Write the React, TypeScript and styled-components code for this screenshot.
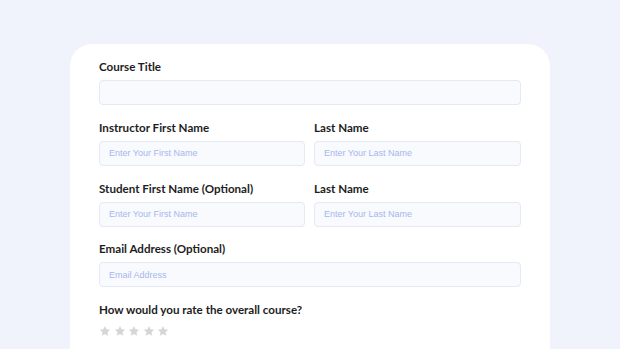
import React from "react";
import styled, { createGlobalStyle } from "styled-components";

const GlobalStyle = createGlobalStyle`
  body {
    margin: 0;
    background: #f0f3fc;
    font-family: "Lato", "Noto Sans", sans-serif;
  }
`;

const Page = styled.div`
  height: 349px;
  overflow: hidden;
  padding-top: 44px;
  box-sizing: border-box;
`;

const Card = styled.div`
  width: 480px;
  height: 330px;
  margin: 0 auto;
  background: #ffffff;
  border-radius: 22px;
  padding: 15px 29px 0;
  box-sizing: border-box;
`;

const Row = styled.div<{ $cols?: number }>`
  display: grid;
  grid-template-columns: ${(p) => (p.$cols === 2 ? "206px 207px" : "1fr")};
  column-gap: 9px;
  margin-bottom: 14.75px;
`;

const Field = styled.div`
  display: flex;
  flex-direction: column;
`;

const Label = styled.label`
  font-size: 11.6px;
  line-height: 16px;
  font-weight: 700;
  color: #1d1d22;
  margin-bottom: 5px;
`;

const Input = styled.input`
  height: 25px;
  box-sizing: border-box;
  width: 100%;
  border: 1px solid #e4e9f2;
  border-radius: 4px;
  background: #f8fafe;
  padding: 0 9px;
  font-family: "Liberation Sans", Arial, sans-serif;
  font-size: 9px;
  outline: none;

  &::placeholder {
    color: #a7b7ec;
  }
`;

const Stars = styled.div`
  display: flex;
  gap: 2.5px;
  margin-top: 2px;
`;

const Star = () => (
  <svg width="12" height="12" viewBox="0 0 24 24">
    <path
      d="M12 1.8l3.1 6.6 7.2.9-5.3 5 1.4 7.1L12 17.9l-6.4 3.5 1.4-7.1-5.3-5 7.2-.9z"
      fill="#d6d6d9"
    />
  </svg>
);

export default function App() {
  return (
    <>
      <GlobalStyle />
      <Page>
        <Card>
          <Row>
            <Field>
              <Label>Course Title</Label>
              <Input />
            </Field>
          </Row>
          <Row $cols={2}>
            <Field>
              <Label>Instructor First Name</Label>
              <Input placeholder="Enter Your First Name" />
            </Field>
            <Field>
              <Label>Last Name</Label>
              <Input placeholder="Enter Your Last Name" />
            </Field>
          </Row>
          <Row $cols={2}>
            <Field>
              <Label>Student First Name (Optional)</Label>
              <Input placeholder="Enter Your First Name" />
            </Field>
            <Field>
              <Label>Last Name</Label>
              <Input placeholder="Enter Your Last Name" />
            </Field>
          </Row>
          <Row>
            <Field>
              <Label>Email Address (Optional)</Label>
              <Input placeholder="Email Address" />
            </Field>
          </Row>
          <Field>
            <Label>How would you rate the overall course?</Label>
            <Stars>
              {[0, 1, 2, 3, 4].map((i) => (
                <Star key={i} />
              ))}
            </Stars>
          </Field>
        </Card>
      </Page>
    </>
  );
}
